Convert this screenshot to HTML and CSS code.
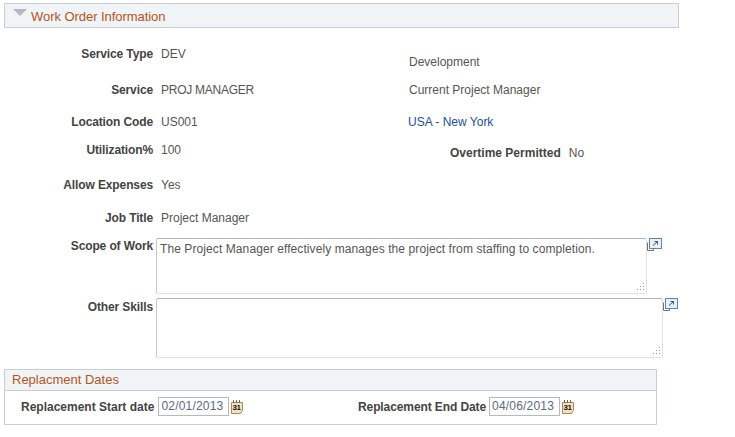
FILE: index.html
```html
<!DOCTYPE html>
<html lang="en">
<head>
<meta charset="utf-8">
<title>Work Order Information</title>
<link rel="stylesheet" href="styles.css">
</head>
<body>
<main class="page">
  <header class="section-head">
    <svg class="twisty" width="14" height="8" viewBox="0 0 14 8"><path d="M0 0H14L7 7Z" fill="#b4b8bc"/></svg>
    <h1 class="section-title">Work Order Information</h1>
  </header>

  <div class="row r-type">
    <span class="label">Service Type</span>
    <span class="value">DEV</span>
    <span class="desc desc-low">Development</span>
  </div>
  <div class="row r-service">
    <span class="label">Service</span>
    <span class="value caps">PROJ MANAGER</span>
    <span class="desc">Current Project Manager</span>
  </div>
  <div class="row r-location">
    <span class="label">Location Code</span>
    <span class="value">US001</span>
    <a class="desc link" href="#">USA - New York</a>
  </div>
  <div class="row r-util">
    <span class="label">Utilization%</span>
    <span class="value">100</span>
    <span class="overtime"><span class="label-inline">Overtime Permitted</span><span class="value">No</span></span>
  </div>
  <div class="row r-expenses">
    <span class="label">Allow Expenses</span>
    <span class="value">Yes</span>
  </div>
  <div class="row r-job">
    <span class="label">Job Title</span>
    <span class="value">Project Manager</span>
  </div>

  <div class="area-row r-scope">
    <span class="label">Scope of Work</span>
    <div class="area area-scope">The Project Manager effectively manages the project from staffing to completion.<svg class="grip" width="10" height="10" viewBox="0 0 10 10"><path d="M8 1h1v1H8zM8 4h1v1H8zM5 4h1v1H5zM8 7h1v1H8zM5 7h1v1H5zM2 7h1v1H2z" fill="#9a9a9a"/></svg></div>
    <svg class="expand" width="16" height="15" viewBox="0 0 16 15"><path d="M1.500 5.500V13.500H7.500V12" fill="none" stroke="#6d7780"/><rect x="3.500" y="1.500" width="12" height="10" fill="#e9f0f5" stroke="#5f85ad"/><path d="M7 8.500L11.500 4.500M8.500 4.500H11.500V7.500" fill="none" stroke="#4a5560"/></svg>
  </div>
  <div class="area-row r-other">
    <span class="label">Other Skills</span>
    <div class="area area-other"><svg class="grip" width="10" height="10" viewBox="0 0 10 10"><path d="M8 1h1v1H8zM8 4h1v1H8zM5 4h1v1H5zM8 7h1v1H8zM5 7h1v1H5zM2 7h1v1H2z" fill="#9a9a9a"/></svg></div>
    <svg class="expand" width="16" height="15" viewBox="0 0 16 15"><path d="M1.500 5.500V13.500H7.500V12" fill="none" stroke="#6d7780"/><rect x="3.500" y="1.500" width="12" height="10" fill="#e9f0f5" stroke="#5f85ad"/><path d="M7 8.500L11.500 4.500M8.500 4.500H11.500V7.500" fill="none" stroke="#4a5560"/></svg>
  </div>

  <section class="dates">
    <h2 class="dates-title">Replacment Dates</h2>
    <div class="dates-row">
      <div class="date-field date-start">
        <span class="label-inline label-start">Replacement Start date</span>
        <span class="date-input">02/01/2013</span>
        <svg class="cal" width="13" height="15" viewBox="0 0 13 15"><path d="M.5 3.500H11.500V11.500L9.500 14.500H.5Z" fill="#f1e3bd" stroke="#a08c5c"/><path d="M2.500 1v3M5.500 1v3M8.500 1v3" stroke="#6e6248"/><text x="1.500" y="11" class="cal-num">31</text></svg>
      </div>
      <div class="date-field date-end">
        <span class="label-inline tight">Replacement End Date</span>
        <span class="date-input">04/06/2013</span>
        <svg class="cal" width="13" height="15" viewBox="0 0 13 15"><path d="M.5 3.500H11.500V11.500L9.500 14.500H.5Z" fill="#f1e3bd" stroke="#a08c5c"/><path d="M2.500 1v3M5.500 1v3M8.500 1v3" stroke="#6e6248"/><text x="1.500" y="11" class="cal-num">31</text></svg>
      </div>
    </div>
  </section>
</main>
</body>
</html>
```

FILE: styles.css
```css
* { box-sizing: border-box; }
html, body { margin: 0; background: #fff; }
body { font: 12px/14px "Liberation Sans", Arial, sans-serif; color: #555; overflow: hidden; }
.page { width: 735px; height: 437px; padding: 3px 0 0 4px; }

.section-head {
  width: 675px; height: 25px; display: flex; align-items: flex-start; gap: 4px;
  padding: 2px 0 0 8px; background: #f1f4f6; border: 1px solid #c9ced2;
}
.twisty { margin-top: 3px; }
.section-title { margin: 4px 0 0; font-size: 13px; font-weight: normal; line-height: 14px; letter-spacing: -.05px; color: #b5541c; }

.row { display: grid; grid-template-columns: 149px 240px auto; column-gap: 8px; align-items: start; }
.label { font-weight: bold; text-align: right; color: #444; letter-spacing: -.12px; }
.label-inline { font-weight: bold; color: #444; }
.label-start { margin-right: 1px; }
.tight { letter-spacing: -.1px; }
.value { color: #555; }
.caps { letter-spacing: -.25px; }
.desc { color: #555; }
.desc-low { margin-top: 8px; }
.link { color: #1c4f9c; text-decoration: none; margin-left: -1px; }
.overtime { display: flex; gap: 8px; margin: 3px 0 0 41px; }

.r-type { margin-top: 19px; height: 36px; }
.r-service { height: 32px; }
.r-location { height: 28px; }
.r-util { height: 35px; }
.r-expenses { height: 33px; }
.r-job { height: 27px; }

.area-row { display: grid; grid-template-columns: 149px auto 16px; column-gap: 3px; justify-content: start; align-items: start; }
.area {
  position: relative; padding: 3px 3px; color: #555; letter-spacing: .09px;
  background: #fff; border: 1px solid #dfe2e5; border-top-color: #b5b5b5; border-left-color: #c8c8c8; border-radius: 2px;
}
.area-scope { width: 491px; height: 56px; }
.area-other { width: 507px; height: 60px; }
.r-scope { height: 60px; }
.r-other { height: 71px; }
.r-scope .label { margin-top: 1px; }
.r-other .label { margin-top: 2px; }
.expand { display: block; margin-left: -4px; margin-top: -1px; }
.grip { position: absolute; right: 1px; bottom: 1px; }

.dates { width: 653px; height: 56px; border: 1px solid #c9ced2; border-top: 0; }
.dates-title {
  margin: 0; height: 22px; padding: 2px 0 0 7px; font-size: 13px; font-weight: normal; line-height: 15px;
  color: #b5541c; background: #f1f4f6; border-top: 1px solid #c9ced2; border-bottom: 1px solid #c9ced2;
}
.dates-row { display: flex; padding-top: 6px; padding-left: 16px; }
.date-field { display: flex; align-items: center; gap: 3px; }
.date-start { width: 337px; }
.date-input {
  width: 71px; height: 19px; padding: 0 2px; font-size: 12px; line-height: 17px; color: #5a6a80;
  background: #fff; border: 1px solid #b9b9b9; letter-spacing: .2px;
}
.cal { margin-left: -1px; }
.cal-num { font: bold 8px "Liberation Sans", Arial, sans-serif; letter-spacing: -.5px; fill: #111; }
```
